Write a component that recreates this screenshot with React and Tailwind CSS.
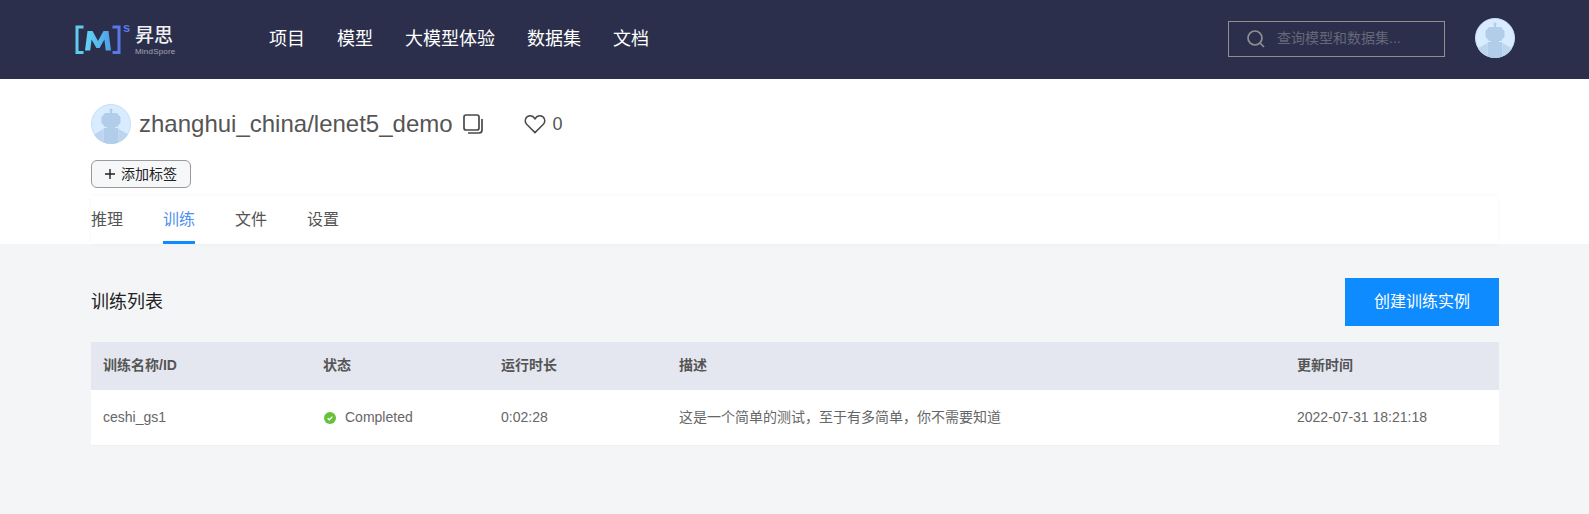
import React from "react";
const font = { fontFamily: '"Liberation Sans","Noto Sans CJK SC",sans-serif' };

function Robot({ cls, id }) {
  return (
    <svg viewBox="0 0 40 40" className={cls}>
      <defs><clipPath id={id}><circle cx="20" cy="20" r="20" /></clipPath></defs>
      <circle cx="20" cy="20" r="19.5" fill="#d9ebfe" stroke="#c6dff8" />
      <g clipPath={`url(#${id})`} fill="#b2cdea">
        <rect x="19" y="5" width="2" height="5" />
        <circle cx="20" cy="6" r="1.6" />
        <rect x="12.5" y="9" width="15" height="14" rx="2.5" />
        <rect x="10.5" y="11.5" width="19" height="9" rx="2" />
        <rect x="16" y="22" width="8" height="3" />
        <rect x="12.5" y="24" width="15" height="17" rx="1" />
        <path d="M12.5 25 L1 31.5 L1 41 L12.5 41 Z" fill="#bdd5ef" />
        <path d="M27.5 25 L39 31.5 L39 41 L27.5 41 Z" fill="#bdd5ef" />
      </g>
    </svg>
  );
}

function Logo() {
  return (
    <svg viewBox="0 0 60 36" className="w-[60px] h-[36px] shrink-0">
      <defs>
        <linearGradient id="lg" x1="0" y1="0" x2="1" y2="0">
          <stop offset="0" stopColor="#62d6f5" />
          <stop offset="1" stopColor="#4f9ee8" />
        </linearGradient>
      </defs>
      <path d="M9.5 7 H3 V32.5 H9.5" fill="none" stroke="#5ccdf0" strokeWidth="3" />
      <path d="M11 30.5 L13.5 11 H18.5 L24 21 L29.5 11 H34.5 L37 30.5 H31.8 L30.4 19.5 L25.6 28 H22.4 L17.6 19.5 L16.2 30.5 Z" fill="url(#lg)" />
      <path d="M38.5 7 H45 V32.5 H38.5" fill="none" stroke="#5a78ea" strokeWidth="3" />
      <text x="49" y="11.5" fontSize="13" fontWeight="700" fill="#5a78ea" style={font}>s</text>
    </svg>
  );
}

export default function App() {
  const nav = ["项目", "模型", "大模型体验", "数据集", "文档"];
  const tabs = ["推理", "训练", "文件", "设置"];
  const head = ["训练名称/ID", "状态", "运行时长", "描述", "更新时间"];
  const cell = "h-[56px] flex items-center px-3 bg-white border-b border-[#eceef2] text-[#666666]";
  return (
    <div style={font} className="min-h-[514px] bg-[#f4f5f7]">
      <header className="h-[79px] bg-[#2c2f4b] flex items-center pl-[74px] pr-[74px]">
        <div className="w-[195px] h-[79px] flex items-start pt-[20px]">
          <Logo />
          <div className="ml-px w-[38px] flex flex-col items-start">
            <span className="text-[19px] font-medium leading-[20px] text-[#eef0f4] mt-[6px] whitespace-nowrap">昇思</span>
            <span className="text-[8px] tracking-[0.2px] leading-[8px] text-[#a5a7b6] mt-[2px]">MindSpore</span>
          </div>
        </div>
        <nav className="flex gap-8 text-[18px] text-white -mt-[1px]">
          {nav.map((n) => <a key={n}>{n}</a>)}
        </nav>
        <div className="ml-auto w-[217px] h-[36px] -mt-[2px] border border-[#8f8f8f] flex items-center pl-[18px]">
          <svg viewBox="0 0 18 18" className="w-[18px] h-[18px]" fill="none" stroke="#8f8f8f" strokeWidth="1.7">
            <circle cx="8" cy="8" r="7" />
            <path d="M13 13 L17 17" />
          </svg>
          <span className="ml-[12px] text-[14px] text-[#66687a]">查询模型和数据集...</span>
        </div>
        <Robot id="r1" cls="ml-[30px] w-[40px] h-[40px] -mt-[3px]" />
      </header>

      <section className="bg-white h-[165px] px-[91px] pt-[25px]">
        <div className="flex items-center h-[40px]">
          <Robot id="r2" cls="w-[40px] h-[40px]" />
          <h1 className="ml-[8px] text-[24px] text-[#555555]">zhanghui_china/lenet5_demo</h1>
          <svg viewBox="0 0 20 20" className="ml-[10px] w-[20px] h-[20px] -mt-[1px]" fill="none" stroke="#4a4a4a" strokeWidth="1.7">
            <rect x="1" y="1" width="15" height="15" rx="2" />
            <path d="M19 5 V16 Q19 19 16 19 H5" />
          </svg>
          <svg viewBox="0 0 24 22" className="ml-[41px] w-[22px] h-[20px]" fill="none" stroke="#4a4a4a" strokeWidth="1.6">
            <path d="M12 20.5 L2.8 11.2 C-0.2 8 1.5 2 6.6 2 C9 2 10.8 3.4 12 5.4 C13.2 3.4 15 2 17.4 2 C22.5 2 24.2 8 21.2 11.2 Z" />
          </svg>
          <span className="ml-[7px] text-[18px] text-[#555555]">0</span>
        </div>
        <button className="mt-[16px] w-[100px] h-[28px] rounded-[6px] border border-[#999999] bg-[#f6f7f9] flex items-center justify-center text-[14px] text-[#222222]">
          <svg viewBox="0 0 10 10" className="w-[10px] h-[10px] mr-[6px]" stroke="#222222" strokeWidth="1.4"><path d="M5 0 V10 M0 5 H10" /></svg>
          添加标签
        </button>
        <div className="mt-[8px] h-[48px] flex gap-10 bg-white shadow-[0_0_4px_rgba(0,0,0,0.04)] text-[16px] text-[#555555]">
          {tabs.map((t) => (
            <a key={t} className={t === "训练" ? "h-[48px] pt-[12px] text-[#4d90f0] border-b-[3px] border-[#0d8bff]" : "h-[48px] pt-[12px]"}>{t}</a>
          ))}
        </div>
      </section>

      <main className="px-[90px]">
        <div className="flex items-center justify-between pt-[34px] h-[98px] pb-[16px]">
          <h2 className="text-[18px] text-[#222222] ml-[1px] mt-[1px]">训练列表</h2>
          <button className="w-[154px] h-[48px] bg-[#0d8bff] text-white text-[16px]">创建训练实例</button>
        </div>
        <div className="grid grid-cols-[220px_178px_178px_618px_1fr] ml-[1px] text-[14px]">
          {head.map((h) => (
            <div key={h} className="h-[48px] flex items-center px-3 pb-[2px] bg-[#e5e7f0] font-bold text-[#555555]">{h}</div>
          ))}
          <div className={cell}>ceshi_gs1</div>
          <div className={cell}>
            <svg viewBox="0 0 12 12" className="ml-px w-[12px] h-[12px] mr-[9px]">
              <circle cx="6" cy="6" r="6" fill="#67c23a" />
              <path d="M3.6 6.2 L5.3 7.8 L8.4 4.6" fill="none" stroke="#fff" strokeWidth="1.3" />
            </svg>
            Completed
          </div>
          <div className={cell}>0:02:28</div>
          <div className={cell}>这是一个简单的测试，至于有多简单，你不需要知道</div>
          <div className={cell}>2022-07-31 18:21:18</div>
        </div>
      </main>
    </div>
  );
}
